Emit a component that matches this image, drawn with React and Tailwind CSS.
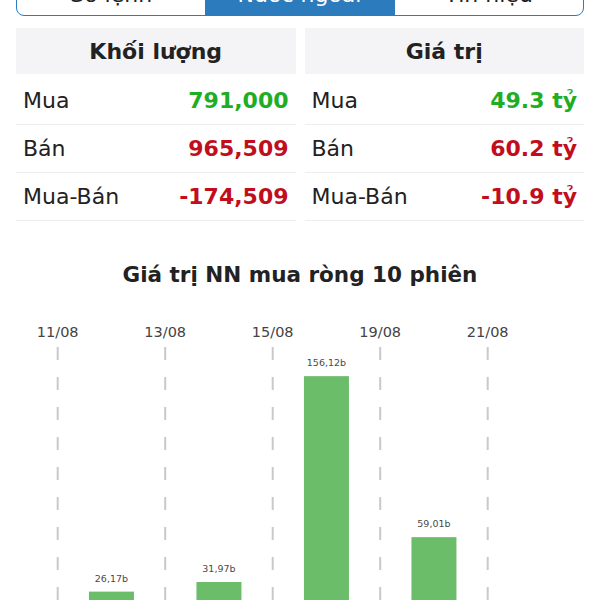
import React from 'react';

const tabs = ['Sổ lệnh', 'Nước ngoài', 'Tín hiệu'];

const tables = [
  {
    title: 'Khối lượng',
    rows: [
      { label: 'Mua', value: '791,000', up: true },
      { label: 'Bán', value: '965,509', up: false },
      { label: 'Mua-Bán', value: '-174,509', up: false },
    ],
  },
  {
    title: 'Giá trị',
    rows: [
      { label: 'Mua', value: '49.3 tỷ', up: true },
      { label: 'Bán', value: '60.2 tỷ', up: false },
      { label: 'Mua-Bán', value: '-10.9 tỷ', up: false },
    ],
  },
];

const dates = ['11/08', '13/08', '15/08', '19/08', '21/08'];
const bars = [
  { slot: 0, value: 26.17, label: '26,17b' },
  { slot: 1, value: 31.97, label: '31,97b' },
  { slot: 2, value: 156.12, label: '156,12b' },
  { slot: 3, value: 59.01, label: '59,01b' },
];

const X0 = 57.7;
const STEP = 107.5;
const ZERO = 325; // zero line sits below the visible area
const SCALE = 1.658;

const Chart = () => (
  <svg width="600" height="290" className="block" style={{ fontFamily: '"DejaVu Sans", sans-serif' }}>
    {dates.map((d, i) => {
      const x = X0 + i * STEP;
      return (
        <g key={d}>
          <text x={x} y="26.5" textAnchor="middle" fontSize="14.5" fill="#444">{d}</text>
          <line x1={x} x2={x} y1="37" y2="290" stroke="#c9c9c9" strokeWidth="2" strokeDasharray="13 17" />
        </g>
      );
    })}
    {bars.map((b) => {
      const cx = X0 + STEP / 2 + b.slot * STEP;
      const top = ZERO - b.value * SCALE;
      return (
        <g key={b.label}>
          <rect x={cx - 22.5} y={top} width="45" height={ZERO - top} fill="#6cbd6a" />
          <text x={cx} y={top - 10} textAnchor="middle" fontSize="9.5" fill="#4a4a4a">{b.label}</text>
        </g>
      );
    })}
  </svg>
);

export default function App() {
  return (
    <div className="w-[600px] h-[600px] overflow-hidden bg-white text-[#222]" style={{ fontFamily: '"DejaVu Sans", sans-serif' }}>
      <div className="mx-4 -mt-[28px] h-[44px] flex border-[1.5px] border-[#2c7bbd] rounded-lg overflow-hidden">
        {tabs.map((t, i) => (
          <div
            key={t}
            className={`flex-1 flex items-center justify-center text-[22px] ${i === 1 ? 'bg-[#2c7bbd] text-white' : 'text-[#222]'} ${i === 2 ? 'border-l-[1.5px] border-[#2c7bbd]' : ''}`}
          >
            {t}
          </div>
        ))}
      </div>

      <div className="mt-[12px] px-4 grid grid-cols-2 gap-[9px]">
        {tables.map((tb) => (
          <div key={tb.title}>
            <div className="h-[46px] flex items-center justify-center bg-[#f4f4f6] text-[22px] font-bold">
              {tb.title}
            </div>
            <div className="pt-[3px]">
              {tb.rows.map((r) => (
                <div key={r.label} className="h-[48px] flex items-center justify-between px-[7px] border-b border-[#ededed] text-[22px]">
                  <span>{r.label}</span>
                  <span className={`font-bold ${r.up ? 'text-[#1fae23]' : 'text-[#c20e1c]'}`}>{r.value}</span>
                </div>
              ))}
            </div>
          </div>
        ))}
      </div>

      <div className="mt-[40px] h-[28px] flex items-center justify-center text-[21.5px] font-bold">
        Giá trị NN mua ròng 10 phiên
      </div>

      <div className="mt-[21px]">
        <Chart />
      </div>
    </div>
  );
}
